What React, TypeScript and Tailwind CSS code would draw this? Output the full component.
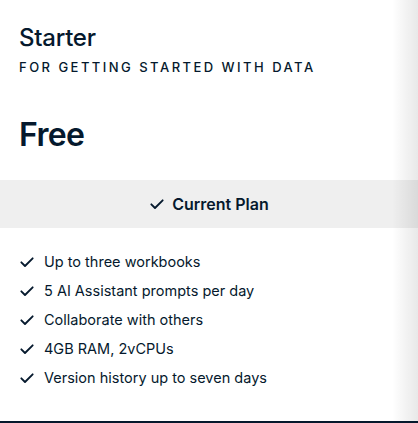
import React from "react";

const Check = ({ className = "" }: { className?: string }) => (
  <svg viewBox="0 0 24 24" className={className} fill="none" stroke="currentColor" strokeWidth={2.8} strokeLinecap="round" strokeLinejoin="round">
    <path d="M3.5 12.5l5.5 5.5L20.5 6.5" />
  </svg>
);

const features = [
  "Up to three workbooks",
  "5 AI Assistant prompts per day",
  "Collaborate with others",
  "4GB RAM, 2vCPUs",
  "Version history up to seven days",
];

export default function App() {
  return (
    <div
      className="relative h-[423px] w-[418px] overflow-hidden bg-white text-[#05192d] border-b-2 border-[#05192d]"
      style={{ fontFamily: "Inter, 'Noto Sans', sans-serif" }}
    >
      <div className="px-[19px] pt-[22px]">
        <h2 className="text-[24px] leading-[32px] font-medium tracking-[-0.01em]">Starter</h2>
        <p className="mt-[3px] text-[13px] leading-[20px] font-medium uppercase tracking-[0.19em]">
          For getting started with data
        </p>
        <p className="mt-[38px] text-[32px] leading-[40px] font-semibold tracking-[-0.02em]">Free</p>
      </div>
      <div className="mt-[25px] flex h-[48px] items-center justify-center gap-[7px] bg-[#efefef]">
        <Check className="h-[16px] w-[16px]" />
        <span className="text-[16px] font-semibold">Current Plan</span>
      </div>
      <ul className="mt-[24px] flex flex-col gap-[9px] px-[19px]">
        {features.map((f) => (
          <li key={f} className="flex items-center gap-[9px] text-[14.5px] leading-[20px]">
            <Check className="h-[16px] w-[16px] shrink-0" />
            <span>{f}</span>
          </li>
        ))}
      </ul>
      <div className="pointer-events-none absolute right-0 top-0 h-full w-[26px] bg-gradient-to-l from-black/[0.09] to-transparent" />
    </div>
  );
}
